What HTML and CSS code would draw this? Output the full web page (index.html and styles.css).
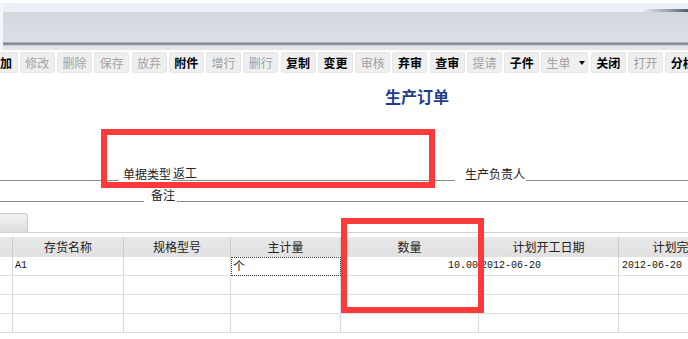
FILE: index.html
```html
<!DOCTYPE html>
<html lang="zh-CN">
<head>
    <meta charset="UTF-8">
    <meta name="viewport" content="width=device-width, initial-scale=1.0">
    <title>生产订单</title>
    <link rel="stylesheet" href="styles.css">
</head>
<body>

    <!-- Window chrome -->
    <div class="chrome">
        <div class="chrome-light"><span class="swoosh"></span></div>
        <div class="chrome-band"></div>
        <div class="chrome-rule"></div>
    </div>

    <!-- Toolbar -->
    <div class="toolbar">
        <span class="tb-btn on first">增加</span>
        <span class="tb-btn">修改</span>
        <span class="tb-btn">删除</span>
        <span class="tb-btn">保存</span>
        <span class="tb-btn">放弃</span>
        <span class="tb-btn on">附件</span>
        <span class="tb-btn">增行</span>
        <span class="tb-btn">删行</span>
        <span class="tb-btn on">复制</span>
        <span class="tb-btn on">变更</span>
        <span class="tb-btn">审核</span>
        <span class="tb-btn on">弃审</span>
        <span class="tb-btn on">查审</span>
        <span class="tb-btn">提请</span>
        <span class="tb-btn on">子件</span>
        <span class="tb-btn drop">生单<i class="caret"></i></span>
        <span class="tb-btn on">关闭</span>
        <span class="tb-btn">打开</span>
        <span class="tb-btn on">分析</span>
    </div>

    <h1 class="doc-title">生产订单</h1>

    <!-- Header fields -->
    <div class="field-row row-a">
        <span class="rule lead-a"></span>
        <span class="label type-label">单据类型</span>
        <span class="value">返工</span>
        <span class="label owner-label">生产负责人</span>
        <span class="rule fill"></span>
    </div>
    <div class="field-row row-b">
        <span class="rule lead-b"></span>
        <span class="label note-label">备注</span>
        <span class="rule fill note-rule"></span>
    </div>

    <div class="tabs"><span class="tab"></span></div>

    <!-- Detail grid -->
    <div class="grid-wrap">
        <div class="grid">
            <div class="gh"></div>
            <div class="gh">存货名称</div>
            <div class="gh">规格型号</div>
            <div class="gh">主计量</div>
            <div class="gh">数量</div>
            <div class="gh">计划开工日期</div>
            <div class="gh">计划完工日期</div>

            <div class="gc"></div>
            <div class="gc mono">A1</div>
            <div class="gc"></div>
            <div class="gc focus">个</div>
            <div class="gc mono num">10.00</div>
            <div class="gc mono">2012-06-20</div>
            <div class="gc mono date2">2012-06-20</div>

            <div class="gc"></div><div class="gc"></div><div class="gc"></div><div class="gc"></div><div class="gc"></div><div class="gc"></div><div class="gc"></div>
            <div class="gc"></div><div class="gc"></div><div class="gc"></div><div class="gc"></div><div class="gc"></div><div class="gc"></div><div class="gc"></div>
            <div class="gc"></div><div class="gc"></div><div class="gc"></div><div class="gc"></div><div class="gc"></div><div class="gc"></div><div class="gc"></div>
        </div>
    </div>

    <!-- Annotation boxes -->
    <div class="mark mark-a"></div>
    <div class="mark mark-b"></div>

</body>
</html>
```

FILE: styles.css
```css
body {
    margin: 0;
    background: #fff;
    font-family: "Noto Sans CJK SC", "Liberation Sans", sans-serif;
    font-size: 12px;
    color: #222;
    overflow: hidden;
}

/* Window chrome */
.chrome {
    border-left: 3px solid #f3f5f8;
}

.chrome-light {
    position: relative;
    height: 9px;
    margin-top: 3px;
    background: #edf1f5;
}

.swoosh {
    position: absolute;
    right: 0;
    top: 6px;
    width: 46px;
    height: 3px;
    background: linear-gradient(to right, rgba(80, 96, 120, 0), #4f6179);
}

.chrome-band {
    height: 30px;
    background: linear-gradient(#d3d7de, #dbdfe6);
}

.chrome-rule {
    height: 8px;
    background: linear-gradient(#a9aeb5 0, #a9aeb5 1px, #7e848c 1px, #7e848c 2px, #959ba3 2px, #959ba3 3px, #c3c8ce 3px, #c3c8ce 4px, #e2e6ec 4px);
}

/* Toolbar */
.toolbar {
    display: flex;
    height: 26px;
    padding-top: 2px;
    box-sizing: border-box;
    overflow: hidden;
    white-space: nowrap;
}

.tb-btn {
    flex: none;
    width: 35px;
    height: 21px;
    margin-right: 2.27px;
    line-height: 21px;
    text-align: center;
    background: #efefef;
    border-radius: 3px;
    box-shadow: inset 0 0 0 1px #e7e7e7;
    color: #a2a2a2;
}

.tb-btn.first {
    margin-left: -17.5px;
}

.tb-btn.on {
    color: #000;
    font-weight: bold;
}

.tb-btn.drop {
    width: 47px;
    text-align: left;
    padding-left: 5px;
    box-sizing: border-box;
    display: flex;
    align-items: center;
}

.caret {
    width: 0;
    height: 0;
    margin-left: 8px;
    border-left: 3.5px solid transparent;
    border-right: 3.5px solid transparent;
    border-top: 4px solid #111;
}

/* Title */
.doc-title {
    margin: 0 0 0 385px;
    padding-top: 10px;
    height: 30px;
    font-size: 16px;
    line-height: 20px;
    font-weight: bold;
    color: #1f3d8f;
}

/* Fields */
.field-row {
    display: flex;
    align-items: flex-end;
}

.row-a {
    height: 66px;
}

.row-b {
    height: 21px;
}

.rule {
    height: 1px;
    margin-bottom: 1px;
    background: #8a8a8a;
}

.lead-a {
    width: 118px;
}

.lead-b {
    width: 144px;
}

.fill {
    flex: 1;
    margin-left: 1px;
}

.note-rule {
    margin-left: 2px;
}

.label {
    line-height: 14px;
    padding-bottom: 1px;
    white-space: nowrap;
}

.type-label {
    margin-left: 5px;
}

.owner-label {
    margin-left: 10px;
}

.note-label {
    margin-left: 7px;
}

.value {
    width: 283px;
    margin-left: 1px;
    margin-bottom: 1px;
    padding-left: 1px;
    box-sizing: border-box;
    line-height: 14px;
    border-bottom: 1px solid #8a8a8a;
}

/* Tabs */
.tabs {
    margin-top: 10px;
    height: 19px;
    border-bottom: 1px solid #cfcfcf;
}

.tab {
    display: block;
    width: 28px;
    height: 19px;
    box-sizing: border-box;
    background: linear-gradient(#f2f2f2, #dedede);
    border: 1px solid #c9c9c9;
    border-left: none;
    border-bottom: none;
    border-radius: 0 4px 0 0;
}

/* Grid */
.grid-wrap {
    margin-top: 4px;
    overflow: hidden;
}

.grid {
    display: grid;
    grid-template-columns: 13px 111px 107px 110px 138px 140px 140px;
    width: max-content;
}

.gh {
    height: 20px;
    line-height: 20px;
    text-align: center;
    white-space: nowrap;
    background: linear-gradient(#e8e8e8, #e1e1e1);
    border-right: 1px solid #cbcbcb;
    box-sizing: border-box;
    color: #222;
}

.gc {
    height: 19px;
    line-height: 18px;
    padding: 0 2px;
    box-sizing: border-box;
    border-right: 1px solid #dadada;
    border-bottom: 1px solid #dedede;
    white-space: nowrap;
}

.mono {
    font-family: "Liberation Mono", "DejaVu Sans Mono", monospace;
    font-size: 10px;
    color: #111;
}

.num {
    text-align: right;
    padding-right: 0;
}

.date2 {
    padding-left: 3px;
}

.focus {
    outline: 1px dotted #444;
    outline-offset: -1px;
}

/* Red annotation boxes */
.mark {
    position: absolute;
    box-sizing: border-box;
    border: 6px solid #fd3a3a;
}

.mark-a {
    left: 101px;
    top: 129px;
    width: 334px;
    height: 59px;
}

.mark-b {
    left: 341px;
    top: 218px;
    width: 143px;
    height: 95px;
}
```
